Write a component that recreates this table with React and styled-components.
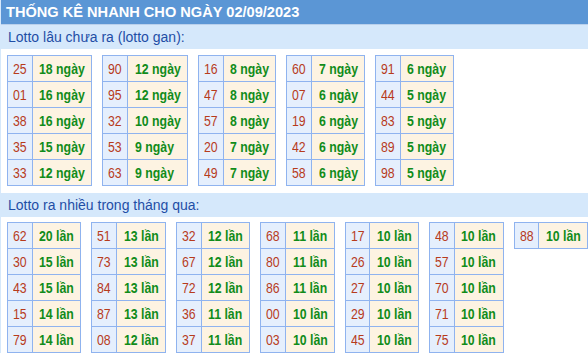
import React, { useLayoutEffect, useRef, useState } from 'react';
import styled, { createGlobalStyle } from 'styled-components';

// the reference uses a narrow face (Arial Narrow); we squeeze Liberation Sans instead
const NARROW = 0.82;

const GlobalStyle = createGlobalStyle`
  body {
    margin: 0;
    background: #ffffff;
    font-family: "Liberation Sans", Arial, sans-serif;
  }
`;

const Wrap = styled.div`
  width: 588px;
  height: 353px;
  overflow: hidden;
  border-left: 1px solid #d5e8fb;
  box-sizing: border-box;
`;

const Title = styled.div`
  height: 24px;
  line-height: 25px;
  padding-left: 5px;
  background: #5b96d5;
  border-bottom: 1px solid #b9d0ec;
  color: #ffffff;
  font-weight: bold;
  font-size: 14.6px;
  text-transform: uppercase;
  white-space: nowrap;
`;

const SubTitle = styled.div`
  height: 24px;
  line-height: 24px;
  padding-left: 7px;
  background: #d5e8fb;
  color: #1f4ea6;
  font-size: 14px;
  margin-top: ${p => p.$gap || 0}px;
`;

const Tables = styled.div`
  display: flex;
  align-items: flex-start;
  gap: 10px;
  padding: ${p => p.$top}px 0 0 6px;
`;

const Table = styled.table`
  border-collapse: collapse;
  font-size: 15px;
  border: 1px solid #8fb3ef;
`;

const Row = styled.tr`
  height: 26px;
`;

const Num = styled.td`
  border: 1px solid #8fb3ef;
  background: #e5effd;
  color: #b73b1c;
  padding: 0 5px;
  text-align: center;
  white-space: nowrap;
`;

const Count = styled.td`
  border: 1px solid #8fb3ef;
  background: #fdf3e2;
  color: #118c1a;
  font-weight: bold;
  padding: 0 6.5px;
  white-space: nowrap;
`;

const Inner = styled.span`
  display: inline-block;
  transform: scaleX(${NARROW});
  transform-origin: left center;
`;

const Narrow = ({ children }) => {
  const ref = useRef(null);
  const [w, setW] = useState(0);
  useLayoutEffect(() => {
    setW(ref.current.offsetWidth);
  }, []);
  return (
    <Inner ref={ref} style={{ marginRight: -w * (1 - NARROW) }}>
      {children}
    </Inner>
  );
};

const gan = [
  [['25', 18], ['01', 16], ['38', 16], ['35', 15], ['33', 12]],
  [['90', 12], ['95', 12], ['32', 10], ['53', 9], ['63', 9]],
  [['16', 8], ['47', 8], ['57', 8], ['20', 7], ['49', 7]],
  [['60', 7], ['07', 6], ['19', 6], ['42', 6], ['58', 6]],
  [['91', 6], ['44', 5], ['83', 5], ['89', 5], ['98', 5]],
];

const nhieu = [
  [['62', 20], ['30', 15], ['43', 15], ['15', 14], ['79', 14]],
  [['51', 13], ['73', 13], ['84', 13], ['87', 13], ['08', 12]],
  [['32', 12], ['67', 12], ['72', 12], ['36', 11], ['37', 11]],
  [['68', 11], ['80', 11], ['86', 11], ['00', 10], ['03', 10]],
  [['17', 10], ['26', 10], ['27', 10], ['29', 10], ['45', 10]],
  [['48', 10], ['57', 10], ['70', 10], ['71', 10], ['75', 10]],
  [['88', 10]],
];

const Block = ({ data, unit }) => (
  <Table>
    <tbody>
      {data.map(([n, c]) => (
        <Row key={n}>
          <Num><Narrow>{n}</Narrow></Num>
          <Count><Narrow>{c} {unit}</Narrow></Count>
        </Row>
      ))}
    </tbody>
  </Table>
);

export default function App() {
  return (
    <Wrap>
      <GlobalStyle />
      <Title>Thống kê nhanh cho ngày 02/09/2023</Title>
      <SubTitle>Lotto lâu chưa ra (lotto gan):</SubTitle>
      <Tables $top={6}>
        {gan.map((d, i) => <Block key={i} data={d} unit="ngày" />)}
      </Tables>
      <SubTitle $gap={7}>Lotto ra nhiều trong tháng qua:</SubTitle>
      <Tables $top={5}>
        {nhieu.map((d, i) => <Block key={i} data={d} unit="lần" />)}
      </Tables>
    </Wrap>
  );
}
